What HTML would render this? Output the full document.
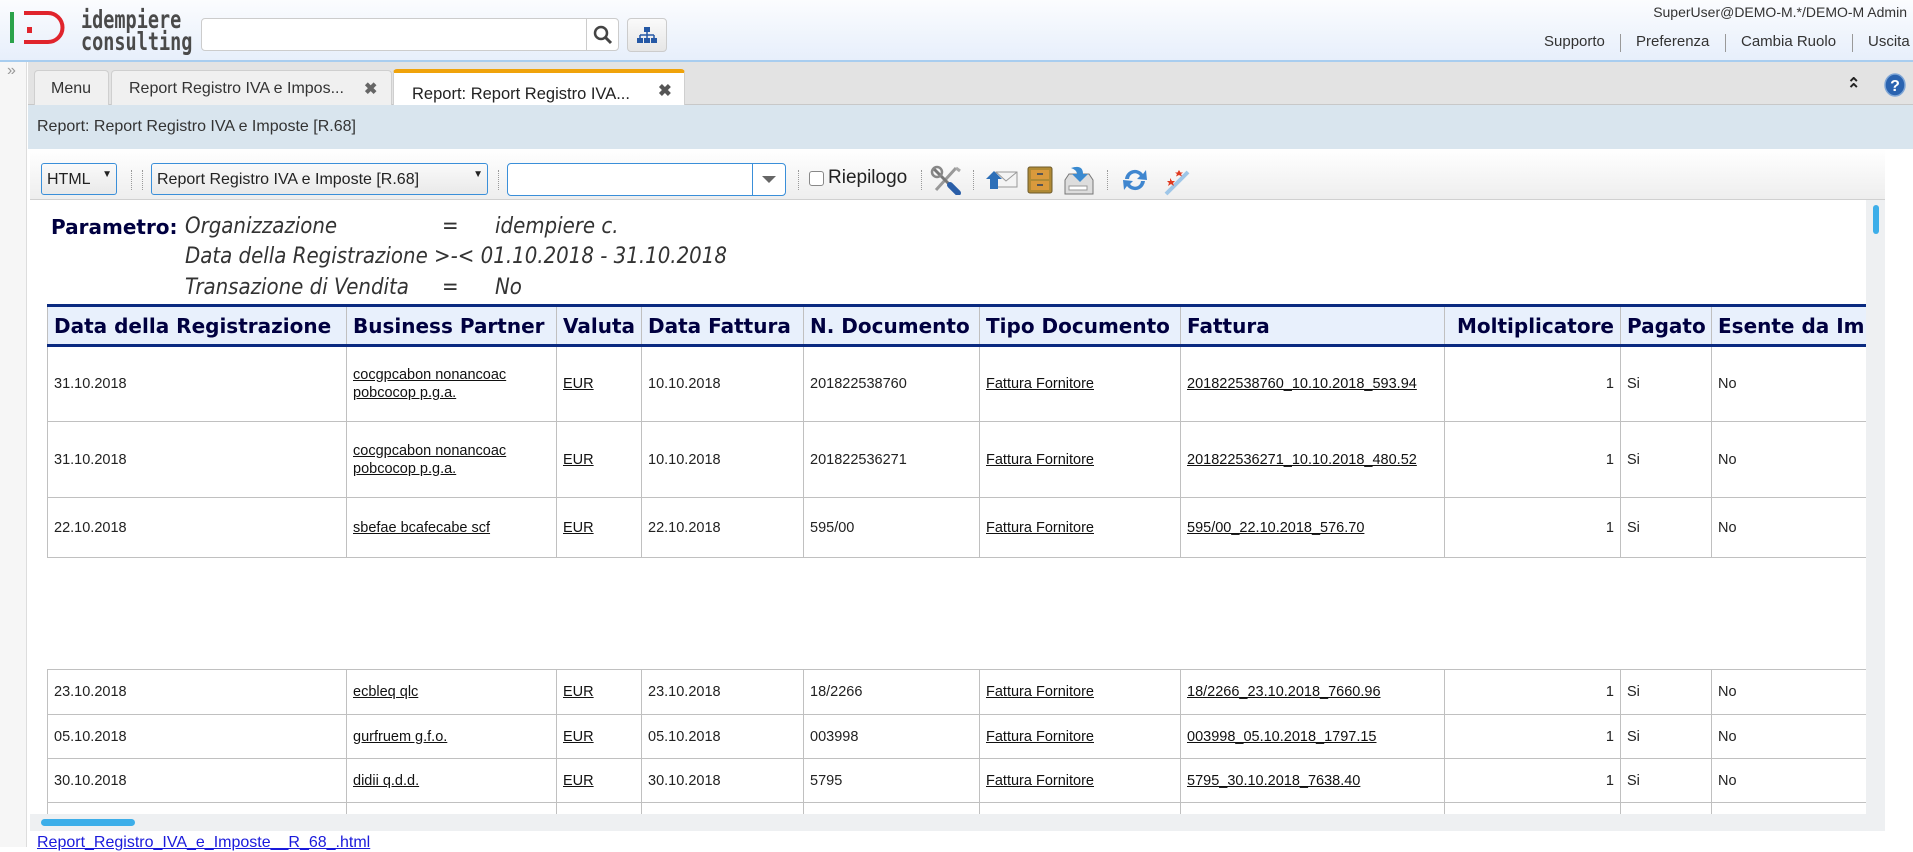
<!DOCTYPE html>
<html><head><meta charset="utf-8">
<style>
*{box-sizing:border-box;margin:0;padding:0}
body{width:1913px;height:847px;overflow:hidden;position:relative;background:#fff;font-family:"Liberation Sans",sans-serif;}
.a{position:absolute}
#hdr{left:0;top:0;width:1913px;height:62px;background:linear-gradient(#fbfcfe,#e7effb);border-bottom:2px solid #a8cdef}
.lg{font-family:"DejaVu Sans Mono",monospace;font-size:25px;color:#4a4a4a;transform:scaleX(.74);transform-origin:left top;line-height:22px;font-weight:bold}
.lnk{font-size:15px;color:#333;top:33px}
.sep{top:34px;width:1px;height:18px;background:#999}
#tabbar{left:0;top:62px;width:1913px;height:43px;background:#e3e3e3;border-bottom:1px solid #c8c8c8}
.tab{top:70px;height:35px;background:#f0f0f0;border:1px solid #cfcfcf;border-bottom:none;border-radius:4px 4px 0 0;font-size:16px;color:#333;padding-top:9px}
#side{left:0;top:62px;width:27px;height:785px;background:#f6f6f6;border-right:1px solid #ddd}
#title{left:28px;top:105px;width:1885px;height:44px;background:#d9e5ee;font-size:16px;color:#333;padding:13px 0 0 9px}
#tb{left:30px;top:149px;width:1855px;height:51px;background:linear-gradient(#fff,#eeeeee);border-bottom:1px solid #d0d0d0}
.sel{height:32px;border:1px solid #3a8fd9;border-radius:3px;background:linear-gradient(#fafafa,#e9e9e9);font-size:16px;color:#222;padding:7px 0 0 5px;top:163px}
.dots{top:170px;width:1px;height:20px;border-left:1px dotted #999}
#rep{left:30px;top:200px;width:1836px;height:614px;overflow:hidden;background:#fff}
.p{font-family:"DejaVu Sans Condensed","DejaVu Sans",sans-serif;font-style:italic;font-size:22px;color:#333}
table{border-collapse:collapse;position:absolute;table-layout:fixed}
th{background:#e8f0fc;font-family:"DejaVu Sans",sans-serif;font-weight:bold;font-size:20px;color:#000040;text-align:left;padding:0 6px;height:40px;white-space:nowrap;overflow:hidden;border-left:1px solid #c0c0c0;border-right:1px solid #c0c0c0}
td{border:1px solid #c0c0c0;font-size:14.5px;color:#222;padding:0 6px;vertical-align:middle;line-height:18px;white-space:nowrap}
td u{color:#111}
.r{text-align:right}
</style></head><body>
<div id="hdr" class="a">
  <div class="a" style="left:10px;top:12px;width:4px;height:31px;background:#2aa24a"></div>
  <div class="a" style="left:27px;top:27px;width:5px;height:6px;background:#e0242c"></div>
  <svg class="a" style="left:20px;top:10px" width="50" height="36"><path d="M4 3 H28 A14.5 14.5 0 0 1 28 32 H4" fill="none" stroke="#e0242c" stroke-width="4"/></svg>
  <div class="a lg" style="left:81px;top:9px">idempiere<br>consulting</div>
  <div class="a" style="left:201px;top:18px;width:418px;height:33px;background:#fff;border:1px solid #ccc;border-radius:4px"></div>
  <div class="a" style="left:586px;top:18px;width:1px;height:33px;background:#ccc"></div>
  <svg class="a" style="left:593px;top:25px" width="20" height="20"><circle cx="8" cy="8" r="6" fill="none" stroke="#444" stroke-width="2.5"/><path d="M12.5 12.5 L18 18" stroke="#444" stroke-width="3"/></svg>
  <div class="a" style="left:627px;top:18px;width:40px;height:34px;background:linear-gradient(#fafafa,#e6e6e6);border:1px solid #ccc;border-radius:4px"></div>
  <svg class="a" style="left:637px;top:26px" width="20" height="18"><rect x="7" y="1" width="6" height="5" fill="#2558a5"/><path d="M10 6V9M3 9H17M3 9V12M10 9V12M17 9V12" stroke="#2558a5" stroke-width="1.5" fill="none"/><rect x="0" y="12" width="6" height="5" fill="#2558a5"/><rect x="7" y="12" width="6" height="5" fill="#2558a5"/><rect x="14" y="12" width="6" height="5" fill="#2558a5"/></svg>
  <div class="a" style="right:6px;top:4px;font-size:14px;color:#333">SuperUser@DEMO-M.*/DEMO-M Admin</div>
  <div class="a lnk" style="left:1544px">Supporto</div>
  <div class="a sep" style="left:1620px"></div>
  <div class="a lnk" style="left:1636px">Preferenza</div>
  <div class="a sep" style="left:1725px"></div>
  <div class="a lnk" style="left:1741px">Cambia Ruolo</div>
  <div class="a sep" style="left:1852px"></div>
  <div class="a lnk" style="left:1868px">Uscita</div>
</div>
<div id="side" class="a"><div class="a" style="left:7px;top:0px;font-size:16px;color:#999">»</div></div>
<div id="tabbar" class="a" style="left:28px;width:1885px"></div>
<div class="a tab" style="left:34px;width:75px;padding-left:16px">Menu</div>
<div class="a tab" style="left:111px;width:281px;padding-left:17px">Report Registro IVA e Impos...<span style="position:absolute;left:252px;top:8px;color:#666;font-weight:bold">✖</span></div>
<div class="a tab" style="left:393px;top:69px;height:37px;width:292px;background:#fff;border-top:4px solid #f0a30a;padding:12px 0 0 18px;color:#222;font-size:16.5px"><span>Report: Report Registro IVA...</span><span style="position:absolute;left:264px;top:8px;color:#555;font-weight:bold">✖</span></div>
<div class="a" style="left:1847px;top:74px;font-size:16px;color:#222;font-weight:bold">&#8963;</div>
<div class="a" style="left:1847px;top:80px;font-size:16px;color:#222;font-weight:bold">&#8963;</div>
<svg class="a" style="left:1884px;top:73px" width="22" height="24"><ellipse cx="11" cy="12" rx="10" ry="11" fill="#2a63b0" stroke="#7fa6d6" stroke-width="1.5"/><text x="11" y="18" font-size="16" font-weight="bold" fill="#fff" text-anchor="middle" font-family="Liberation Sans">?</text></svg>
<div id="title" class="a">Report: Report Registro IVA e Imposte [R.68]</div>
<div id="tb" class="a"></div>
<div class="a sel" style="left:41px;width:76px">HTML<span style="position:absolute;right:4px;top:5px;font-size:10px">▼</span></div>
<div class="a dots" style="left:131px"></div>
<div class="a dots" style="left:142px"></div>
<div class="a sel" style="left:151px;width:337px">Report Registro IVA e Imposte [R.68]<span style="position:absolute;right:4px;top:5px;font-size:10px">▼</span></div>
<div class="a dots" style="left:498px"></div>
<div class="a" style="left:507px;top:163px;width:279px;height:33px;background:#fff;border:1px solid #3a8fd9;border-radius:4px"></div>
<div class="a" style="left:752px;top:163px;width:1px;height:33px;background:#3a8fd9"></div>
<div class="a" style="left:762px;top:176px;border-left:7px solid transparent;border-right:7px solid transparent;border-top:7px solid #666"></div>
<div class="a dots" style="left:798px"></div>
<div class="a" style="left:809px;top:171px;width:15px;height:15px;border:1px solid #888;border-radius:3px;background:#fff"></div>
<div class="a" style="left:828px;top:167px;font-size:19px;color:#222">Riepilogo</div>
<div class="a dots" style="left:921px"></div>
<svg class="a" style="left:930px;top:165px" width="32" height="30"><path d="M26 3 L6 25" stroke="#999" stroke-width="3"/><path d="M4 4 L22 22" stroke="#777" stroke-width="3"/><path d="M20 20 L28 28" stroke="#2a5ea8" stroke-width="6" stroke-linecap="round"/><circle cx="7" cy="7" r="5" fill="none" stroke="#888" stroke-width="2.5"/><path d="M26 3 L30 6" stroke="#aaa" stroke-width="3"/></svg>
<div class="a dots" style="left:973px"></div>
<svg class="a" style="left:986px;top:169px" width="32" height="22"><rect x="10" y="3" width="21" height="15" fill="#f4f4f4" stroke="#999"/><path d="M10 3 L20 12 L31 3" fill="none" stroke="#999"/><path d="M8 2 L16 10 H12 V20 H4 V10 H0 Z" fill="#2d6fb8"/></svg>
<svg class="a" style="left:1027px;top:166px" width="26" height="28"><rect x="1" y="1" width="24" height="26" rx="2" fill="#b08a35" stroke="#6d5a2a"/><rect x="4" y="4" width="18" height="9" fill="#d99a3c"/><rect x="4" y="15" width="18" height="9" fill="#d99a3c"/><rect x="10" y="7" width="6" height="2" fill="#555"/><rect x="10" y="18" width="6" height="2" fill="#555"/></svg>
<svg class="a" style="left:1063px;top:164px" width="32" height="32"><path d="M2 16 L6 10 H26 L30 16 V30 H2 Z" fill="#ddd" stroke="#777"/><rect x="6" y="22" width="18" height="4" fill="#fff" stroke="#999"/><path d="M8 4 Q20 0 20 10 H25 L17 18 L9 10 H14 Q14 6 8 4 Z" fill="#3a8ad0"/></svg>
<div class="a dots" style="left:1107px"></div>
<svg class="a" style="left:1121px;top:166px" width="28" height="28"><path d="M4 13 A10 10 0 0 1 22 8 L25 4 L26 14 L16 13 L19 10 A6 6 0 0 0 8 13 Z" fill="#3f86cf"/><path d="M24 15 A10 10 0 0 1 6 20 L3 24 L2 14 L12 15 L9 18 A6 6 0 0 0 20 15 Z" fill="#3f86cf"/></svg>
<svg class="a" style="left:1160px;top:166px" width="32" height="30"><path d="M6 28 L28 6" stroke="#9ec6e8" stroke-width="4"/><path d="M10 12 l2 3 3 0 -2 2 1 3 -3-2 -3 2 1-3 -2-2 3 0z" fill="#e03a20"/><path d="M19 4 l1.5 2.5 2.5 0 -2 1.5 1 2.5 -3-1.5 -3 1.5 1-2.5 -2-1.5 2.5 0z" fill="#e03a20"/></svg>

<div id="rep" class="a">
  <div class="a" style="left:21px;top:15px;font-family:'DejaVu Sans',sans-serif;font-weight:bold;font-size:20px;color:#000040">Parametro:</div>
  <div class="a p" style="left:155px;top:14px">Organizzazione</div>
  <div class="a p" style="left:412px;top:14px">=</div>
  <div class="a p" style="left:465px;top:14px">idempiere c.</div>
  <div class="a p" style="left:155px;top:44px">Data della Registrazione &gt;-&lt; 01.10.2018 - 31.10.2018</div>
  <div class="a p" style="left:155px;top:75px">Transazione di Vendita</div>
  <div class="a p" style="left:412px;top:75px">=</div>
  <div class="a p" style="left:465px;top:75px">No</div>
  <table style="left:17px;top:104px;width:2000px;border-top:3px solid #0a2a80">
    <colgroup><col style="width:299px"><col style="width:210px"><col style="width:85px"><col style="width:162px"><col style="width:176px"><col style="width:201px"><col style="width:264px"><col style="width:176px"><col style="width:91px"><col style="width:336px"></colgroup>
    <tr style="border-bottom:3px solid #0a2a80"><th>Data della Registrazione</th><th>Business Partner</th><th>Valuta</th><th>Data Fattura</th><th>N. Documento</th><th>Tipo Documento</th><th>Fattura</th><th class="r">Moltiplicatore</th><th>Pagato</th><th>Esente da Imposta</th></tr>
    <tr style="height:76px"><td>31.10.2018</td><td><u>cocgpcabon nonancoac<br>pobcocop p.g.a.</u></td><td><u>EUR</u></td><td>10.10.2018</td><td>201822538760</td><td><u>Fattura Fornitore</u></td><td><u>201822538760_10.10.2018_593.94</u></td><td class="r">1</td><td>Si</td><td>No</td></tr>
    <tr style="height:76px"><td>31.10.2018</td><td><u>cocgpcabon nonancoac<br>pobcocop p.g.a.</u></td><td><u>EUR</u></td><td>10.10.2018</td><td>201822536271</td><td><u>Fattura Fornitore</u></td><td><u>201822536271_10.10.2018_480.52</u></td><td class="r">1</td><td>Si</td><td>No</td></tr>
    <tr style="height:60px"><td>22.10.2018</td><td><u>sbefae bcafecabe scf</u></td><td><u>EUR</u></td><td>22.10.2018</td><td>595/00</td><td><u>Fattura Fornitore</u></td><td><u>595/00_22.10.2018_576.70</u></td><td class="r">1</td><td>Si</td><td>No</td></tr>
  </table>
  <table style="left:17px;top:469px;width:2000px">
    <colgroup><col style="width:299px"><col style="width:210px"><col style="width:85px"><col style="width:162px"><col style="width:176px"><col style="width:201px"><col style="width:264px"><col style="width:176px"><col style="width:91px"><col style="width:336px"></colgroup>
    <tr style="height:45px"><td>23.10.2018</td><td><u>ecbleq qlc</u></td><td><u>EUR</u></td><td>23.10.2018</td><td>18/2266</td><td><u>Fattura Fornitore</u></td><td><u>18/2266_23.10.2018_7660.96</u></td><td class="r">1</td><td>Si</td><td>No</td></tr>
    <tr style="height:44px"><td>05.10.2018</td><td><u>gurfruem g.f.o.</u></td><td><u>EUR</u></td><td>05.10.2018</td><td>003998</td><td><u>Fattura Fornitore</u></td><td><u>003998_05.10.2018_1797.15</u></td><td class="r">1</td><td>Si</td><td>No</td></tr>
    <tr style="height:44px"><td>30.10.2018</td><td><u>didii q.d.d.</u></td><td><u>EUR</u></td><td>30.10.2018</td><td>5795</td><td><u>Fattura Fornitore</u></td><td><u>5795_30.10.2018_7638.40</u></td><td class="r">1</td><td>Si</td><td>No</td></tr>
    <tr style="height:44px"><td>&nbsp;</td><td></td><td></td><td></td><td></td><td></td><td></td><td></td><td></td><td></td></tr>
  </table>
</div>
<div class="a" style="left:1866px;top:200px;width:19px;height:614px;background:#eef0f2"></div>
<div class="a" style="left:1873px;top:205px;width:6px;height:29px;background:#3daee9;border-radius:3px"></div>
<div class="a" style="left:30px;top:814px;width:1855px;height:17px;background:#eef0f2"></div>
<div class="a" style="left:41px;top:819px;width:94px;height:7px;background:#3daee9;border-radius:4px"></div>
<div class="a" style="left:37px;top:834px;font-size:16px;color:#1a1adb;text-decoration:underline">Report_Registro_IVA_e_Imposte__R_68_.html</div>
</body></html>
